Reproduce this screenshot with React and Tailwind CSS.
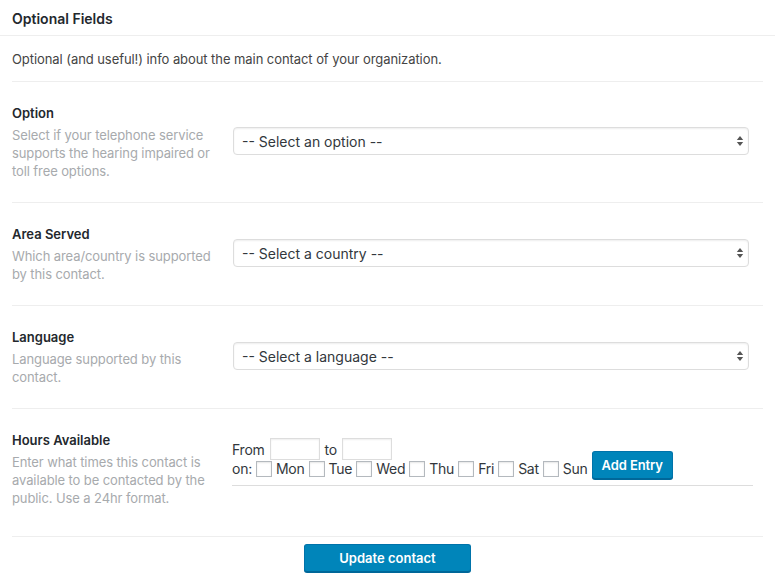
import React from "react";

function Arrows() {
  return (
    <svg width="8" height="12" viewBox="0 0 8 12" className="absolute right-[4px] top-1/2 -translate-y-1/2 pointer-events-none">
      <polygon points="4,1 7.2,5 0.8,5" fill="#555" />
      <polygon points="0.8,7 7.2,7 4,11" fill="#555" />
    </svg>
  );
}

function FakeSelect({ text }) {
  return (
    <div className="relative w-[516px] h-[28px] border border-[#ddd] rounded-[4px] bg-white shadow-[inset_0_1px_2px_rgba(0,0,0,0.07)] flex items-center pl-[8px] text-[14px] text-[#32373c]">
      {text}
      <Arrows />
    </div>
  );
}

function Row({ title, desc, children }) {
  return (
    <div className="flex items-center border-b border-[#eee] pt-[20px] pb-[22px]">
      <div className="w-[221px] shrink-0">
        <div className="text-[13px] leading-[20px] font-semibold text-[#23282d] pt-[1px]">{title}</div>
        <div className="mt-[3px] w-[208px] text-[13px] leading-[18px] text-[#a7aaad] tracking-[-0.1px]">{desc}</div>
      </div>
      <div className="flex-1">{children}</div>
    </div>
  );
}

function Box() {
  return <span className="inline-block w-[16px] h-[16px] border border-[#b4b9be] bg-white shadow-[inset_0_1px_2px_rgba(0,0,0,0.1)] shrink-0" />;
}

export default function App() {
  const days = ["Mon", "Tue", "Wed", "Thu", "Fri", "Sat", "Sun"];
  return (
    <div className="w-[775px] h-[584px] bg-white font-['Inter','Liberation_Sans',Arial,sans-serif] text-[#444]">
      <div className="h-[36px] border-b border-[#eee] px-[12px] flex items-center pt-[1px]">
        <span className="text-[14px] font-semibold text-[#23282d]">Optional Fields</span>
      </div>
      <div className="px-[12px] w-[775px]">
        <div className="w-[751px]">
          <div className="pt-[13px] pb-[12px] border-b border-[#eee] text-[13px] leading-[20px] text-[#444] tracking-[-0.07px]">
            Optional (and useful!) info about the main contact of your organization.
          </div>
          <Row title="Option" desc="Select if your telephone service supports the hearing impaired or toll free options.">
            <FakeSelect text="-- Select an option --" />
          </Row>
          <Row title="Area Served" desc="Which area/country is supported by this contact.">
            <FakeSelect text="-- Select a country --" />
          </Row>
          <Row title="Language" desc="Language supported by this contact.">
            <FakeSelect text="-- Select a language --" />
          </Row>
          <div className="flex items-start border-b border-[#eee] pt-[20px] pb-[29px]">
            <div className="w-[220px] shrink-0">
              <div className="text-[13px] leading-[20px] font-semibold text-[#23282d] pt-[1px]">Hours Available</div>
              <div className="mt-[3px] w-[208px] text-[13px] leading-[18px] text-[#a7aaad] tracking-[-0.1px]">
                Enter what times this contact is available to be contacted by the public. Use a 24hr format.
              </div>
            </div>
            <div className="flex-1 pt-[9px] text-[14px] text-[#32373c] tracking-[-0.25px]">
              <div className="flex items-center gap-[5px] h-[22px]">
                <span>From</span>
                <span className="inline-block w-[50px] h-[22px] border border-[#ddd] bg-white shadow-[inset_0_1px_2px_rgba(0,0,0,0.07)]" />
                <span>to</span>
                <span className="inline-block w-[50px] h-[22px] border border-[#ddd] bg-white shadow-[inset_0_1px_2px_rgba(0,0,0,0.07)]" />
              </div>
              <div className="flex items-end gap-[4px] -mt-[9px] h-[28px]">
                <span className="leading-[20px]">on:</span>
                {days.map((d) => (
                  <React.Fragment key={d}>
                    <span className="mb-[2px] flex"><Box /></span>
                    <span className="leading-[20px]">{d}</span>
                  </React.Fragment>
                ))}
                <button className="h-[28px] px-[9px] rounded-[3px] bg-[#0085ba] border border-[#0073aa] border-b-[#006799] shadow-[0_1px_0_#006799] text-white text-[13px] font-semibold leading-[26px] tracking-[-0.1px]">
                  Add Entry
                </button>
              </div>
              <div className="mt-[6px] h-px w-[521px] bg-[#ddd]" />
            </div>
          </div>
          <div className="flex justify-center pt-[7px]">
            <button className="w-[167px] h-[28px] rounded-[3px] bg-[#0085ba] border border-[#0073aa] border-b-[#006799] shadow-[0_1px_0_#006799] text-white text-[13px] font-semibold leading-[26px]">
              Update contact
            </button>
          </div>
        </div>
      </div>
    </div>
  );
}
